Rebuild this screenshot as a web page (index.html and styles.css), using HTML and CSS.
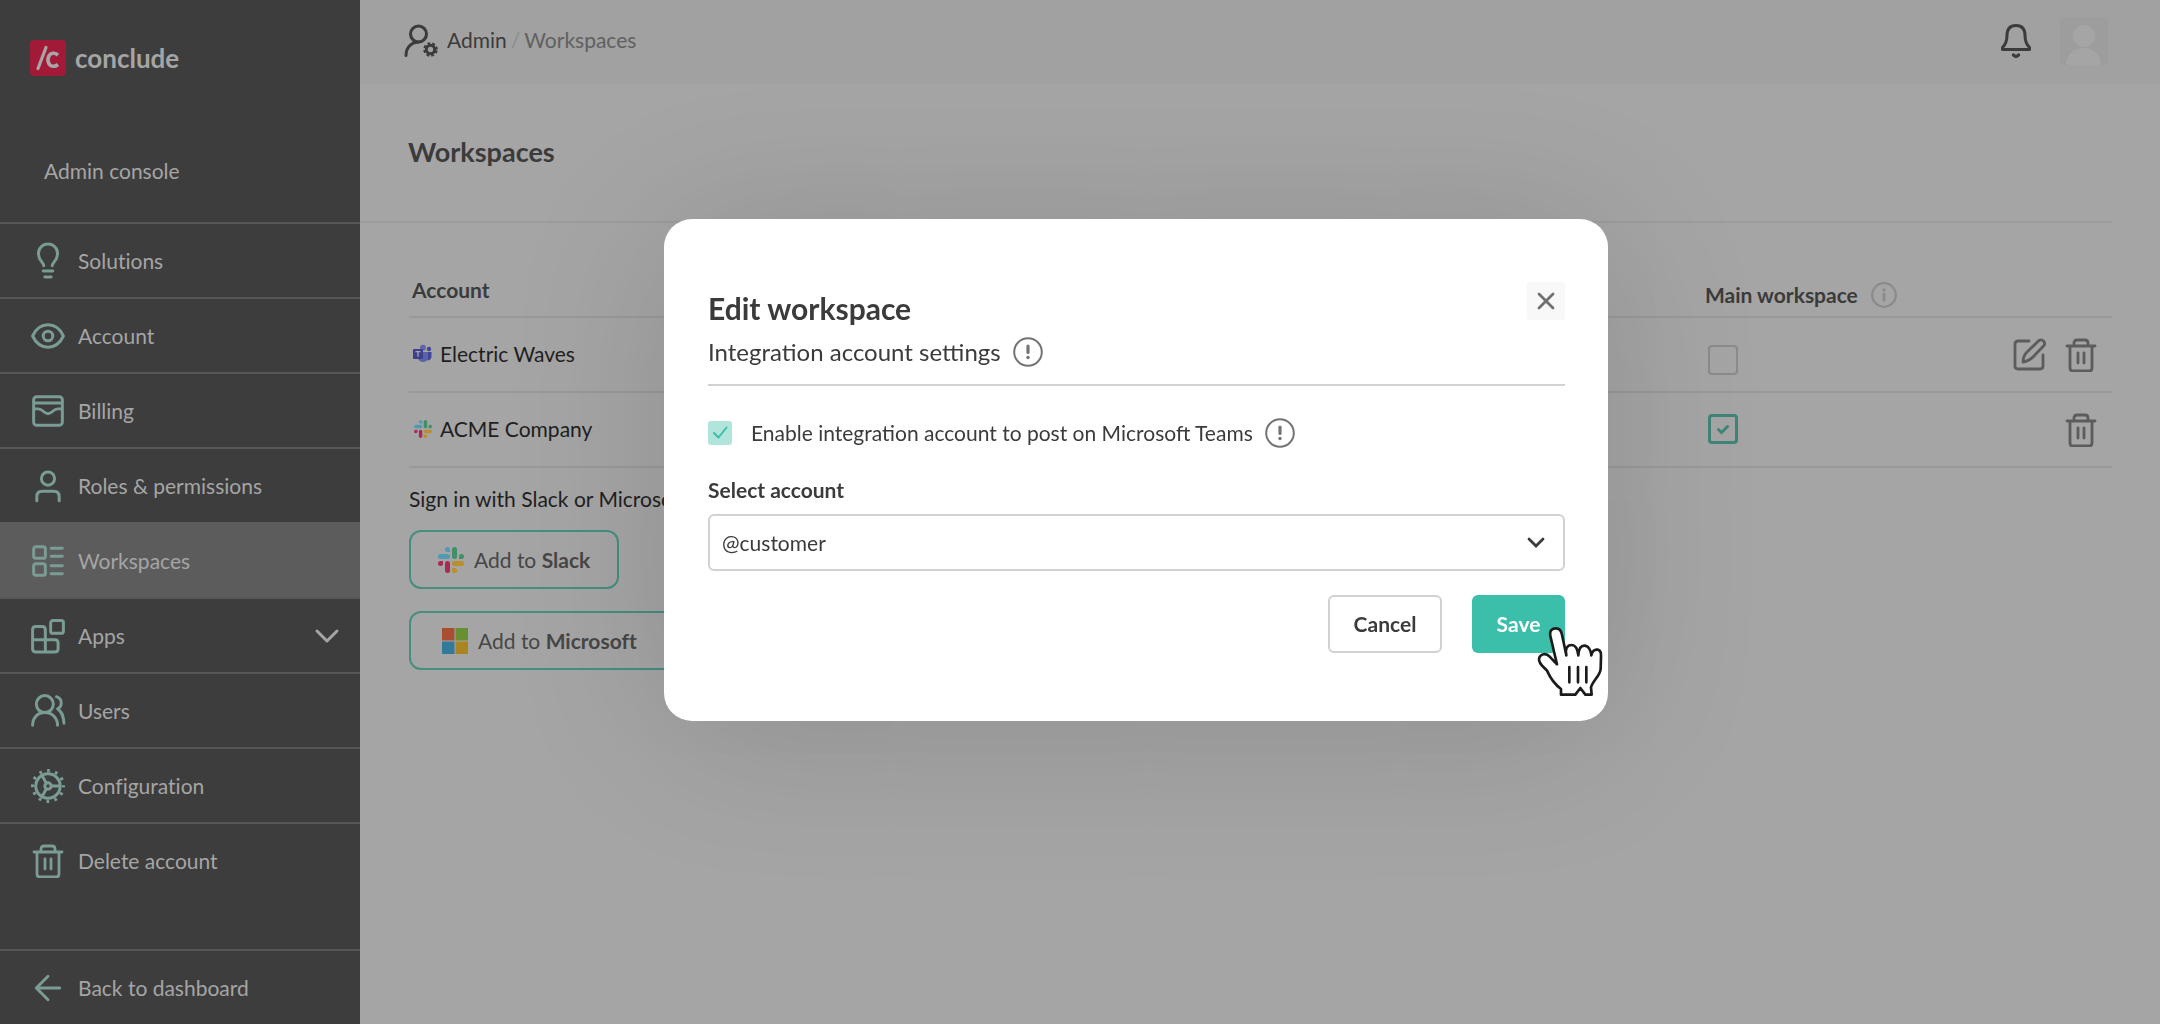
FILE: index.html
```html
<!DOCTYPE html>
<html lang="en">
<head>
<meta charset="utf-8">
<title>Conclude – Workspaces</title>
<link rel="stylesheet" href="styles.css">
</head>
<body>
<svg class="sprite" aria-hidden="true">
  <symbol id="trash" viewBox="0 0 32 34">
    <path d="M2 8h28M9 8V5q0-3 3-3h8q3 0 3 3v3M5 8v22q0 3 3 3h16q3 0 3-3V8M13 15v10M19 15v10"/>
  </symbol>
  <symbol id="slack" viewBox="0 0 26 26">
    <g fill="#4f9ab4"><rect x="0" y="7" width="12" height="5" rx="2.5"/><path d="M12 5V2.500A2.500 2.500 0 1 0 9.500 5z"/></g>
    <g fill="#3f8f69"><rect x="14" y="0" width="5" height="12" rx="2.500"/><path d="M21 12h2.500A2.500 2.500 0 1 0 21 9.500z"/></g>
    <g fill="#b98e2b"><rect x="14" y="14" width="12" height="5" rx="2.500"/><path d="M14 21v2.500a2.500 2.500 0 1 0 2.500-2.500z"/></g>
    <g fill="#a92b55"><rect x="7" y="14" width="5" height="12" rx="2.500"/><path d="M5 14H2.500A2.500 2.500 0 1 0 5 16.500z"/></g>
  </symbol>
  <symbol id="alert" viewBox="0 0 30 30">
    <circle cx="15" cy="15" r="13.800" fill="none" stroke="currentColor" stroke-width="2"/>
    <path d="M15 9v6.500" stroke="currentColor" stroke-width="3.200" stroke-linecap="round"/>
    <circle cx="15" cy="20.500" r="1.700" fill="currentColor"/>
  </symbol>
</svg>

<div class="app">
  <aside class="sidebar">
    <a class="brand" href="#">
      <svg class="brand-mark" viewBox="0 0 36 36" aria-hidden="true">
        <rect width="36" height="36" rx="4" fill="#a31a38"/>
        <path d="M8 28.500 16 7.500" fill="none" stroke="#a9a5a6" stroke-width="3.200" stroke-linecap="round"/>
        <path d="M28 15.200c-3.500-3-7.500-2.200-9 .600-1.400 2.500-1.400 5.500 0 8 1.500 2.800 5.500 3.500 9 .700" fill="none" stroke="#a9a5a6" stroke-width="3.600"/>
      </svg>
      <span>conclude</span>
    </a>
    <p class="console">Admin console</p>
    <nav class="nav">
      <a href="#"><svg class="icon" viewBox="0 0 32 32"><path d="M12 20.500c0-3.500-5-4.500-5-11.500a9 9 0 0 1 18 0c0 7-5 8-5 11.500M11.500 25.500h9M13 31h6"/></svg>Solutions</a>
      <a href="#"><svg class="icon" viewBox="0 0 32 32"><path d="M1.500 16C5 8.500 10 5.500 16 5.500S27 8.500 30.500 16C27 23.500 22 26.500 16 26.500S5 23.500 1.500 16z"/><circle cx="16" cy="16" r="4.500"/></svg>Account</a>
      <a href="#"><svg class="icon" viewBox="0 0 32 32"><rect x="2.500" y="2.500" width="27" height="27" rx="3"/><path d="M3 8.500h26M3 14h4c4 0 5 4.500 9 4.500s5-4.500 9-4.500h4"/></svg>Billing</a>
      <a href="#"><svg class="icon" viewBox="0 0 32 32"><circle cx="16" cy="9" r="6.200"/><path d="M5.500 30v-4q0-5 5-5h11q5 0 5 5v4"/></svg>Roles &amp; permissions</a>
      <a href="#" class="active" aria-current="page"><svg class="icon" viewBox="0 0 32 32"><rect x="2.500" y="2.500" width="11" height="11" rx="2"/><rect x="2.500" y="18.500" width="11" height="11" rx="2"/><path d="M19 4h10.500M19 11.500h10.500M19 20.500h10.500M19 28h10.500"/></svg>Workspaces</a>
      <a href="#"><svg class="icon" viewBox="0 0 32 32"><rect x="18.500" y="1.500" width="12" height="12" rx="2"/><path d="M1.500 19.500V10q0-3 3-3h6q3 0 3 3v21M1.500 19.500h21q3 0 3 3v5.500q0 3-3 3h-18q-3 0-3-3V19.500"/></svg>Apps<svg class="chevron" viewBox="0 0 24 16"><path d="m2 3 10 10L22 3"/></svg></a>
      <a href="#"><svg class="icon" viewBox="0 0 32 32"><circle cx="13" cy="9.500" r="8"/><path d="M1.500 29.500c0-7 4.500-12 11.500-12s12 5 12 12M24 2.500c6 2 5.500 9.500 1 11.500 4.500 3 5.500 7 6 13.500"/></svg>Users</a>
      <a href="#"><svg class="icon" viewBox="0 0 32 32"><circle cx="16" cy="16" r="11.500"/><circle cx="16" cy="16" r="14.500" stroke-linecap="butt" stroke-width="3" stroke-dasharray="2.600 4.992" stroke-dashoffset="1.300"/><circle cx="16" cy="16" r="3"/><path d="M19 16h8M14.500 13.400l-4-7M14.500 18.600l-4 7"/></svg>Configuration</a>
      <a href="#"><svg class="icon" viewBox="0 0 32 34"><use href="#trash"/></svg>Delete account</a>
    </nav>
    <nav class="nav nav-back">
      <a href="#"><svg class="icon" viewBox="0 0 32 32"><path d="M27 16H5M16 5 5 16l11 11"/></svg>Back to dashboard</a>
    </nav>
  </aside>

  <div class="page">
    <header class="topbar">
      <svg class="admin-icon" viewBox="0 0 34 34" aria-hidden="true">
        <circle cx="14.500" cy="10" r="8"/><path d="M2 31.500c0-8 5-13 12-13.500"/>
        <circle cx="26.500" cy="25.500" r="4.200"/><circle cx="26.500" cy="25.500" r="6.300" stroke-linecap="butt" stroke-dasharray="2.800 2.148" stroke-dashoffset="3.874" stroke-width="2"/>
      </svg>
      <nav class="crumbs"><a href="#">Admin</a><span class="slash">/</span><a href="#" class="current">Workspaces</a></nav>
      <button class="plain" type="button" aria-label="Notifications">
        <svg class="bell" viewBox="0 0 32 36"><path d="M16 2.500c-7 0-9 5-9 10 0 6-1.500 9-4.500 12v2h27v-2c-3-3-4.500-6-4.500-12 0-5-2-10-9-10z"/><path d="M13.500 32q2.500 3 5 0" stroke-width="3.500"/></svg>
      </button>
      <svg class="avatar" viewBox="0 0 48 48" role="img" aria-label="Profile"><rect width="48" height="48" rx="4" fill="#9d9d9d"/><circle cx="24" cy="19" r="11" fill="#a5a5a5"/><path d="M6 48c0-9 6-17 18-17s17 8 17 17z" fill="#a5a5a5"/></svg>
    </header>

    <main class="content">
      <div class="title-row"><h1>Workspaces</h1></div>
      <div class="body">
        <table class="accounts">
          <colgroup><col><col class="col-main"><col class="col-actions"></colgroup>
          <thead>
            <tr>
              <th scope="col">Account</th>
              <th scope="col" class="main-head"><div class="head-flex">Main workspace
                <svg class="info" viewBox="0 0 26 26" aria-hidden="true"><circle cx="13" cy="13" r="11.800" fill="none" stroke="currentColor" stroke-width="2.200"/><path d="M13 12v6" stroke="currentColor" stroke-width="3" stroke-linecap="round"/><circle cx="13" cy="8" r="1.700" fill="currentColor"/></svg></div></th>
              <td></td>
            </tr>
          </thead>
          <tbody>
            <tr>
              <td><div class="account">
                <svg class="service" viewBox="0 0 20 20" aria-hidden="true"><circle cx="17" cy="5" r="2.200" fill="#42469a"/><path d="M13.500 8h6v5q-1 3.500-4 3.500z" fill="#42469a"/><circle cx="11" cy="3.800" r="3" fill="#6166ab"/><path d="M7 8h9v6q-1 4-5 4t-5-4z" fill="#5c61a9"/><rect x="1" y="5" width="10" height="10" rx="1" fill="#3c4189"/><path d="M3.500 7.700h5M6 7.700v5" stroke="#a5a5b5" stroke-width="1.300"/></svg>
                Electric Waves</div></td>
              <td><input class="tick low" type="checkbox" aria-label="Electric Waves is the main workspace"></td>
              <td><div class="actions">
                <button class="plain" type="button" aria-label="Edit"><svg class="action" viewBox="0 0 34 34"><path d="M16 3H5q-3 0-3 3v22q0 3 3 3h22q3 0 3-3V17M10 24c0-5 2-8 4-10L26 2.500q2.500-1.500 4.500.500t.5 4.500L20 19q-4 4-10 5z"/></svg></button>
                <button class="plain" type="button" aria-label="Delete"><svg class="action" viewBox="0 0 32 34"><use href="#trash"/></svg></button>
              </div></td>
            </tr>
            <tr>
              <td><div class="account"><svg class="service small" aria-hidden="true"><use href="#slack"/></svg>ACME Company</div></td>
              <td><input class="tick" type="checkbox" checked aria-label="ACME Company is the main workspace"></td>
              <td><div class="actions">
                <button class="plain" type="button" aria-label="Delete"><svg class="action" viewBox="0 0 32 34"><use href="#trash"/></svg></button>
              </div></td>
            </tr>
          </tbody>
        </table>
        <p class="hint">Sign in with Slack or Microsoft</p>
        <div class="connect">
          <button type="button"><svg class="vendor" aria-hidden="true"><use href="#slack"/></svg><span>Add to <b>Slack</b></span></button>
          <button type="button" class="wide"><svg class="vendor" viewBox="0 0 26 26" aria-hidden="true"><path fill="#a94f31" d="M0 0h12.500v12.500H0z"/><path fill="#679032" d="M13.500 0H26v12.500H13.500z"/><path fill="#33799c" d="M0 13.500h12.500V26H0z"/><path fill="#a98420" d="M13.500 13.500H26V26H13.500z"/></svg><span>Add to <b>Microsoft</b></span></button>
        </div>
      </div>
    </main>
  </div>
</div>

<div class="overlay">
  <form class="modal" role="dialog" aria-labelledby="modal-title">
    <div class="modal-head">
      <div>
        <h2 id="modal-title">Edit workspace</h2>
        <p class="subtitle">Integration account settings <svg class="alert" aria-hidden="true"><use href="#alert"/></svg></p>
      </div>
      <button class="close" type="button" aria-label="Close"><svg viewBox="0 0 18 18"><path d="m2 2 14 14M16 2 2 16"/></svg></button>
    </div>
    <div class="enable">
      <input id="enable" type="checkbox" checked>
      <label for="enable">Enable integration account to post on Microsoft Teams</label>
      <svg class="alert" aria-hidden="true"><use href="#alert"/></svg>
    </div>
    <label class="field-label" for="account">Select account</label>
    <select id="account"><option>@customer</option></select>
    <div class="buttons">
      <button class="cancel" type="button">Cancel</button>
      <button class="save" type="button">Save</button>
    </div>
    <svg class="cursor" viewBox="860 465 204 216" aria-hidden="true">
      <path d="M904 502C898 480 910 475 920 475S936 484 938 494L951 556C946 536 954 525 967 525S985 540 987 556C988 538 993 527 1005 527S1025 541 1026 556C1028 544 1036 537 1045 539S1056 549 1055 560L1054 596C1053 617 1030 632 1025 652L1027 674H1008L993 654 978 674H935V657C914 642 902 622 893 602 883 591 868 582 869 567 872 550 891 548 901 560L923 583C917 558 909 524 904 502Z" fill="#fff"/>
      <path d="M960 591v46M986 591v46M1011 591v46"/>
    </svg>
  </form>
</div>
</body>
</html>
```
FILE: styles.css
```css
* { box-sizing: border-box; }

body {
  margin: 0;
  font: 21px/28px Lato, "Liberation Sans", sans-serif;
  color: #1f1f1f;
  background: #a5a5a5;
}

h1, h2, p { margin: 0; }
a { color: inherit; text-decoration: none; }
button { font: inherit; cursor: pointer; }
svg { display: block; flex: none; }
svg use { stroke: inherit; }

.sprite { position: absolute; width: 0; height: 0; }
.plain { padding: 0; border: 0; background: none; }

.app { display: flex; min-height: 100vh; font-variant-ligatures: none; }

/* Sidebar */
.sidebar {
  flex: none;
  display: flex;
  flex-direction: column;
  width: 360px;
  color: #a5a5a5;
  background: #3d3d3d;
}
.brand {
  display: flex;
  align-items: center;
  gap: 9px;
  padding: 40px 30px 0;
  font-size: 26px;
  line-height: 36px;
  font-weight: 700;
}
.brand-mark { width: 36px; height: 36px; }
.console { padding: 81px 44px 37px; }
.nav a {
  display: flex;
  align-items: center;
  gap: 13px;
  height: 75px;
  padding: 0 21px 0 31px;
  border-top: 2px solid #565656;
}
.nav a.active { border-color: #5c5c5c; background: #5c5c5c; }
.nav-back { margin-top: auto; }
.icon, .chevron {
  width: 34px;
  height: 34px;
  fill: none;
  stroke: #7b9c95;
  stroke-width: 2.8;
  stroke-linecap: round;
  stroke-linejoin: round;
  overflow: visible;
}
.chevron { width: 24px; height: 16px; margin-left: auto; stroke: #a5a5a5; stroke-width: 3; }

/* Page */
.page { flex: 1; min-width: 0; }
.topbar {
  display: flex;
  align-items: center;
  height: 84px;
  padding: 0 52px 2px 44px;
  background: #a1a1a1;
}
.admin-icon {
  width: 34px;
  height: 34px;
  fill: none;
  stroke: #3b3b3b;
  stroke-width: 3;
  stroke-linecap: round;
}
.crumbs { display: flex; gap: 4px; margin: 0 auto 0 9px; padding-bottom: 2px; color: #3b3b3b; }
.slash { color: #8c8c8c; }
.current { color: #606060; }
.bell {
  width: 32px;
  height: 36px;
  fill: none;
  stroke: #3b3b3b;
  stroke-width: 3;
  stroke-linejoin: round;
  stroke-linecap: round;
}
.avatar { width: 48px; height: 48px; margin-left: 28px; }

.title-row {
  margin-right: 48px;
  padding: 50px 48px 51px;
  border-bottom: 2px solid #9c9c9c;
}
h1 { font-size: 27px; line-height: 36px; color: #3b3b3b; }
.body { padding: 0 48px 48px 49px; }

.accounts { width: 100%; border-collapse: collapse; }
.accounts tr { height: 75px; border-bottom: 2px solid #999; }
.accounts thead tr { height: 94px; }
.accounts th { padding: 0 0 7px 3px; vertical-align: bottom; text-align: left; color: #3b3b3b; }
.accounts th:first-child { padding-bottom: 12px; }
.accounts td { padding: 0 0 2px 3px; }
.col-main { width: 301px; }
.col-actions { width: 109px; }
.head-flex { display: flex; align-items: center; gap: 13px; }
.info { width: 26px; height: 26px; color: #8b8b8b; }
.account { display: flex; align-items: center; gap: 8px; }
.service { width: 20px; height: 20px; }
.service.small { width: 18px; height: 18px; margin-left: 2px; }
.tick {
  appearance: none;
  display: block;
  width: 30px;
  height: 30px;
  margin: 0 0 0 3px;
  border: 2px solid #8b8b8b;
  border-radius: 4px;
}
.tick.low { margin-top: 12px; }
.tick:checked {
  border: 3px solid #3f8577;
  background: url("data:image/svg+xml,%3Csvg xmlns='http://www.w3.org/2000/svg' viewBox='0 0 24 24'%3E%3Cpath d='m7.500 12.500 3 3 6-6' fill='none' stroke='%233f8577' stroke-width='3' stroke-linecap='round'/%3E%3C/svg%3E") center / 24px no-repeat;
}
.actions { display: flex; justify-content: flex-end; gap: 17px; padding: 2px 14px 0 0; }
.action {
  width: 34px;
  height: 34px;
  fill: none;
  stroke: #5c5c5c;
  stroke-width: 2.8;
  stroke-linecap: round;
  stroke-linejoin: round;
}

.hint { padding: 17px 0 17px; white-space: nowrap; }
.connect { display: flex; flex-direction: column; align-items: flex-start; gap: 22px; }
.connect button {
  display: flex;
  align-items: center;
  gap: 10px;
  height: 59px;
  padding: 0 27px;
  border: 2px solid #468e80;
  border-radius: 12px;
  color: #474747;
  background: none;
}
.connect .wide { padding: 0 48px 0 31px; }
.vendor { width: 26px; height: 26px; }

/* Dialog */
.overlay {
  position: fixed;
  inset: 0;
  display: flex;
  align-items: flex-start;
  justify-content: center;
  padding: 219px 0 0 112px;
}
.modal {
  position: relative;
  width: 944px;
  padding: 63px 43px 68px 44px;
  border-radius: 28px;
  color: #3b3b3b;
  background: #fff;
  box-shadow: 0 12px 160px rgba(0, 0, 0, .14);
}
.modal-head {
  display: flex;
  justify-content: space-between;
  align-items: flex-start;
  padding-bottom: 17px;
  border-bottom: 2px solid #d1d1d1;
}
h2 { padding-top: 8px; font-size: 30px; line-height: 36px; }
.subtitle {
  display: flex;
  align-items: center;
  gap: 12px;
  padding-top: 11px;
  font-size: 24px;
  line-height: 30px;
}
.alert { width: 30px; height: 30px; color: #747474; }
.close {
  display: grid;
  place-items: center;
  width: 38px;
  height: 38px;
  padding: 0;
  border: 0;
  border-radius: 3px;
  background: #f8f8f8;
}
.close svg { width: 18px; height: 18px; stroke: #707070; stroke-width: 2.8; stroke-linecap: round; }
.enable { display: flex; align-items: center; gap: 12px; padding-top: 32px; }
.enable input {
  appearance: none;
  width: 24px;
  height: 24px;
  margin: 0 7px 0 0;
  border-radius: 3px;
  background: #b1e5db url("data:image/svg+xml,%3Csvg xmlns='http://www.w3.org/2000/svg' viewBox='0 0 24 24'%3E%3Cpath d='m6 12 4.500 4.500L18.500 6.500' fill='none' stroke='%233bbfab' stroke-width='2' stroke-linecap='round' stroke-linejoin='round'/%3E%3C/svg%3E") center / 24px no-repeat;
}
.field-label { display: block; padding: 28px 0 10px; font-weight: 700; }
select {
  appearance: none;
  display: block;
  width: 100%;
  height: 57px;
  padding: 0 12px;
  border: 2px solid #d1d1d1;
  border-radius: 6px;
  font: inherit;
  color: inherit;
  background: #fff url("data:image/svg+xml,%3Csvg xmlns='http://www.w3.org/2000/svg' viewBox='0 0 18 12'%3E%3Cpath d='m2 2 7 7 7-7' fill='none' stroke='%233b3b3b' stroke-width='2.800' stroke-linecap='round'/%3E%3C/svg%3E") right 18px center / 18px 12px no-repeat;
}
.buttons { display: flex; justify-content: flex-end; gap: 30px; padding-top: 24px; }
.buttons button { height: 58px; border-radius: 6px; font-weight: 700; }
.cancel { width: 114px; border: 2px solid #d1d1d1; color: #3b3b3b; background: #fff; }
.save { width: 93px; border: 0; color: #fff; background: #3bbfab; }
.cursor {
  position: absolute;
  right: 4px;
  bottom: 24px;
  width: 68px;
  height: 72px;
  fill: none;
  stroke: #1b1b1b;
  stroke-width: 8;
  stroke-linejoin: round;
  stroke-linecap: round;
}
```
